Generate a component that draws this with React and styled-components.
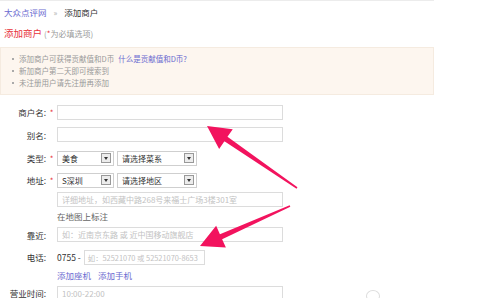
import React from 'react'
import styled, { createGlobalStyle } from 'styled-components'

const GlobalStyle = createGlobalStyle`
  html, body {
    margin: 0;
    padding: 0;
    background: #fff;
    overflow: hidden;
  }
  body {
    font-family: "Noto Sans CJK SC", "Liberation Sans", sans-serif;
    font-size: 8px;
    color: #333;
  }
`

const Page = styled.div`
  position: relative;
  width: 477px;
  height: 298px;
  overflow: hidden;
`

const Main = styled.div`
  width: 434px;
  border-top: 1px solid #ececec;
`

const Crumbs = styled.div`
  display: flex;
  align-items: center;
  gap: 7px;
  height: 22px;
  padding: 0 0 0 4px;
  font-size: 8.5px;
`

const CrumbLink = styled.a`
  color: #6a6ad0;
  text-decoration: none;
`

const CrumbSep = styled.span`
  color: #aaa;
  font-size: 8px;
`

const Title = styled.div`
  display: flex;
  align-items: baseline;
  gap: 2px;
  height: 20px;
  padding-left: 4px;
  color: #e8333a;
  font-size: 9.5px;
  line-height: 20px;
`

const Hint = styled.span`
  color: #999;
  font-size: 8px;

  em {
    color: #e8333a;
    font-style: normal;
  }
`

const Notice = styled.ul`
  margin: 4px 0 0;
  padding: 5px 0 5px 18px;
  background: #fdf6ef;
  border: 1px solid #f5ebe0;
  list-style: none;
`

const NoticeItem = styled.li`
  position: relative;
  height: 12px;
  line-height: 12px;
  font-size: 7.5px;
  color: #999;

  &::before {
    content: '';
    position: absolute;
    left: -7px;
    top: 5px;
    width: 2px;
    height: 2px;
    background: #aaa;
  }

  a {
    color: #6a6ad0;
    text-decoration: none;
    margin-left: 4px;
  }
`

const Form = styled.div`
  display: flex;
  flex-direction: column;
  margin-top: 6px;
`

const Row = styled.div`
  display: flex;
  align-items: center;
  height: ${p => p.$h}px;
`

const Label = styled.div`
  display: flex;
  justify-content: flex-end;
  width: 46px;
  flex: none;
  font-size: 8.5px;
  color: #333;
`

const Star = styled.span`
  width: 11px;
  flex: none;
  color: #e8333a;
  font-size: 8px;
  text-align: center;
`

const Field = styled.div`
  display: flex;
  align-items: center;
  box-sizing: border-box;
  width: ${p => p.$w}px;
  height: 15px;
  padding-left: ${p => (p.$tight ? 3 : 4)}px;
  border: 1px solid #dcdcdc;
  background: #fff;
  color: #c2c2c2;
  font-size: ${p => (p.$tight ? 7.4 : 8)}px;
  white-space: nowrap;
  overflow: hidden;
`

const Select = styled.div`
  display: flex;
  align-items: center;
  justify-content: space-between;
  box-sizing: border-box;
  width: ${p => p.$w}px;
  height: 15px;
  margin-right: 3px;
  padding: 0 2px 0 4px;
  border: 1px solid #cfcfcf;
  background: #fff;
  color: #333;
  font-size: 8px;
`

const DropBtn = styled.span`
  display: flex;
  align-items: center;
  justify-content: center;
  box-sizing: border-box;
  width: 10px;
  height: 10px;
  border: 1px solid #999;
  background: #ececec;

  &::after {
    content: '';
    border-left: 2px solid transparent;
    border-right: 2px solid transparent;
    border-top: 3px solid #333;
  }
`

const Sub = styled.div`
  padding-left: 57px;
  display: flex;
  align-items: center;
  gap: 7px;
  height: ${p => p.$h}px;
  font-size: 8.5px;
  color: ${p => (p.$link ? '#6a6ad0' : '#666')};
`

const Prefix = styled.span`
  color: #333;
  font-size: 8.5px;
  margin-right: 3px;
`

const Arrows = styled.svg`
  position: absolute;
  left: 0;
  top: 0;
  pointer-events: none;
`

const Mark = styled.div`
  position: absolute;
  left: 366px;
  top: 290px;
  width: 12px;
  height: 10px;
  border: 1px solid #ddd;
  border-radius: 50%;
`

function Arrow ({ x1, y1, x2, y2 }) {
  const dx = x2 - x1
  const dy = y2 - y1
  const len = Math.hypot(dx, dy)
  const ux = dx / len
  const uy = dy / len
  const px = -uy
  const py = ux
  const headLen = 23
  const headW = 12
  const shaftW = 2.7
  const bx = x2 - ux * headLen
  const by = y2 - uy * headLen
  const pts = [
    [x1 + px * 0.8, y1 + py * 0.8],
    [bx + px * shaftW, by + py * shaftW],
    [bx + px * headW, by + py * headW],
    [x2, y2],
    [bx - px * headW, by - py * headW],
    [bx - px * shaftW, by - py * shaftW],
    [x1 - px * 0.8, y1 - py * 0.8]
  ]
  return <polygon points={pts.map(p => p.join(',')).join(' ')} fill="#f2135e" />
}

export default function App () {
  return (
    <Page>
      <GlobalStyle />
      <Main>
        <Crumbs>
          <CrumbLink href="#">大众点评网</CrumbLink>
          <CrumbSep>»</CrumbSep>
          <span>添加商户</span>
        </Crumbs>
        <Title>
          添加商户
          <Hint>(<em>*</em>为必填选项)</Hint>
        </Title>
        <Notice>
          <NoticeItem>添加商户可获得贡献值和D币<a href="#">什么是贡献值和D币?</a></NoticeItem>
          <NoticeItem>新加商户第二天即可搜索到</NoticeItem>
          <NoticeItem>未注册用户请先注册再添加</NoticeItem>
        </Notice>
        <Form>
          <Row $h={22}>
            <Label>商户名:</Label><Star>*</Star>
            <Field $w={226} />
          </Row>
          <Row $h={23}>
            <Label>别名:</Label><Star />
            <Field $w={226} />
          </Row>
          <Row $h={24}>
            <Label>类型:</Label><Star>*</Star>
            <Select $w={57}>美食<DropBtn /></Select>
            <Select $w={80}>请选择菜系<DropBtn /></Select>
          </Row>
          <Row $h={20}>
            <Label>地址:</Label><Star>*</Star>
            <Select $w={57}>S深圳<DropBtn /></Select>
            <Select $w={80}>请选择地区<DropBtn /></Select>
          </Row>
          <Row $h={18}>
            <Label /><Star />
            <Field $w={226}>详细地址，如西藏中路268号来福士广场3楼301室</Field>
          </Row>
          <Sub $h={15}>在地图上标注</Sub>
          <Row $h={23}>
            <Label>靠近:</Label><Star />
            <Field $w={226}>如：近南京东路 或 近中国移动旗舰店</Field>
          </Row>
          <Row $h={22}>
            <Label>电话:</Label><Star />
            <Prefix>0755 -</Prefix>
            <Field $w={121} $tight>如：52521070 或 52521070-8653</Field>
          </Row>
          <Sub $h={14} $link>
            <span>添加座机</span>
            <span>添加手机</span>
          </Sub>
          <Row $h={22}>
            <Label>营业时间:</Label><Star />
            <Field $w={226}>10:00-22:00</Field>
          </Row>
        </Form>
      </Main>
      <Arrows width="477" height="298">
        <Arrow x1={297} y1={188} x2={207} y2={126} />
        <Arrow x1={290} y1={206} x2={200} y2={246} />
      </Arrows>
      <Mark />
    </Page>
  )
}
